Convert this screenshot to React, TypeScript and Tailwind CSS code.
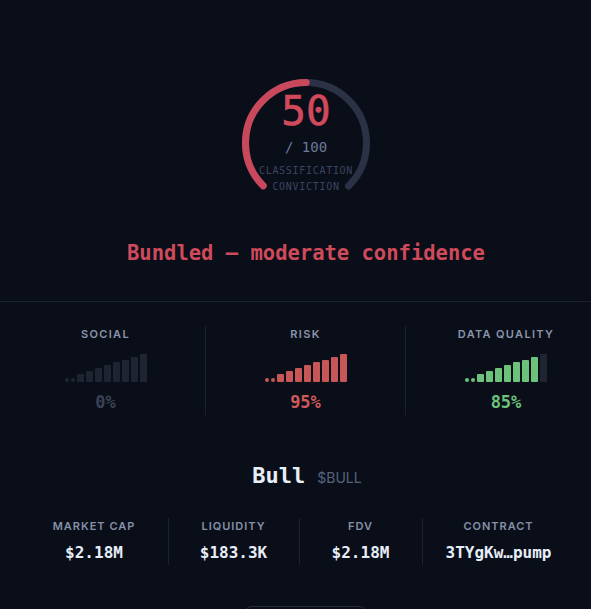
import React from "react";

const mono = { fontFamily: '"DejaVu Sans Mono", "Liberation Mono", monospace' };
const sans = { fontFamily: 'Inter, "Noto Sans", sans-serif' };

type Tone = "red" | "green" | "muted";

const toneFill: Record<Tone, string> = {
  red: "bg-[#c75656]",
  green: "bg-[#6cc27b]",
  muted: "bg-[#1f2432]",
};

const toneText: Record<Tone, string> = {
  red: "text-[#cf5a5a]",
  green: "text-[#6cc27b]",
  muted: "text-[#3a4254]",
};

const barHeights = [4, 4, 8, 11, 14, 17, 20, 22, 25, 28];

function SignalBars({ value, tone }: { value: number; tone: Tone }) {
  const filled = Math.round(value / 10);
  return (
    <div className="flex h-[28px] items-end gap-[2px]">
      {barHeights.map((h, i) => (
        <span
          key={i}
          className={`${i < 2 ? "w-[4px] rounded-full" : "w-[7px] rounded-[1px]"} ${
            i < filled ? toneFill[tone] : toneFill.muted
          }`}
          style={{ height: h }}
        />
      ))}
    </div>
  );
}

function StatColumn({
  label,
  value,
  tone,
  last,
}: {
  label: string;
  value: number;
  tone: Tone;
  last?: boolean;
}) {
  return (
    <div
      className={`flex h-[89px] flex-col items-center ${
        last ? "" : "border-r border-[#1c2130]"
      }`}
    >
      <p
        className="text-[11px] font-semibold uppercase leading-4 tracking-[0.12em] text-[#8994aa]"
        style={sans}
      >
        {label}
      </p>
      <div className="mt-[12px]">
        <SignalBars value={value} tone={value === 0 ? "muted" : tone} />
      </div>
      <p
        className={`mt-[10px] text-[17px] font-bold leading-5 ${
          value === 0 ? toneText.muted : toneText[tone]
        }`}
        style={mono}
      >
        {value}%
      </p>
    </div>
  );
}

function Metric({
  label,
  value,
  width,
  last,
}: {
  label: string;
  value: string;
  width: string;
  last?: boolean;
}) {
  return (
    <div
      className={`flex h-[47px] flex-col items-center ${width} ${
        last ? "" : "border-r border-[#1c2130]"
      }`}
    >
      <p
        className="text-[11px] font-semibold uppercase leading-4 tracking-[0.09em] text-[#8591a8]"
        style={sans}
      >
        {label}
      </p>
      <p
        className="mt-[8px] text-[16px] font-bold leading-[22px] text-[#e6edf8]"
        style={mono}
      >
        {value}
      </p>
    </div>
  );
}

function Gauge({ score }: { score: number }) {
  const r = 60.5;
  const circ = 2 * Math.PI * r;
  const arc = circ * 0.75;
  const filled = arc * (score / 100);
  return (
    <div className="relative h-[136px] w-[136px]">
      <svg width="136" height="136" viewBox="0 0 136 136">
        <circle
          cx="68"
          cy="68"
          r={r}
          fill="none"
          stroke="#2b3246"
          strokeWidth="7"
          strokeLinecap="round"
          strokeDasharray={`${arc} ${circ}`}
          transform="rotate(135 68 68)"
        />
        <circle
          cx="68"
          cy="68"
          r={r}
          fill="none"
          stroke="#c9485b"
          strokeWidth="7"
          strokeLinecap="round"
          strokeDasharray={`${filled} ${circ}`}
          transform="rotate(135 68 68)"
        />
      </svg>
      <div className="absolute inset-x-[-20px] top-[14px] flex flex-col items-center" style={mono}>
        <span className="text-[41px] leading-[44px] text-[#d04a5c] [-webkit-text-stroke:0.6px_#d04a5c]">
          {score}
        </span>
        <span className="mt-[4px] text-[14px] leading-5 text-[#6b7a99]">/ 100</span>
        <span className="mt-[6px] text-[10px] uppercase leading-4 tracking-[0.07em] text-[#3b4560]">
          Classification
        </span>
        <span className="text-[10px] uppercase leading-4 tracking-[0.07em] text-[#3b4560]">
          Conviction
        </span>
      </div>
    </div>
  );
}

export default function App() {
  return (
    <div className="min-h-screen w-full overflow-hidden bg-[#0a0e19]">
      <div className="w-[612px]">
        <section className="flex flex-col items-center pt-[75px]">
          <Gauge score={50} />
          <h1
            className="mt-[28px] text-[20.5px] font-bold leading-7 text-[#cf4a5b]"
            style={mono}
          >
            Bundled — moderate confidence
          </h1>
        </section>
      </div>
      <div className="mt-[34px] h-px w-full bg-[#1c2130]" />
      <div className="w-[612px]">
        <section className="mt-[24px] grid grid-cols-3 px-[6px]">
          <StatColumn label="Social" value={0} tone="muted" />
          <StatColumn label="Risk" value={95} tone="red" />
          <StatColumn label="Data Quality" value={85} tone="green" last />
        </section>
        <div className="mt-[46px] flex items-baseline justify-center gap-[12px] pl-[2px]">
          <h2 className="text-[22px] font-bold leading-[30px] text-[#e8eef8]" style={mono}>
            Bull
          </h2>
          <span className="text-[14px] text-[#56637d]" style={sans}>
            $BULL
          </span>
        </div>
      </div>
      <section className="mt-[27px] flex justify-center pl-[4px]">
        <Metric label="Market Cap" value="$2.18M" width="w-[148px]" />
        <Metric label="Liquidity" value="$183.3K" width="w-[131px]" />
        <Metric label="FDV" value="$2.18M" width="w-[123px]" />
        <Metric label="Contract" value="3TYgKw…pump" width="w-[152px]" last />
      </section>
      <div className="mt-[41px] flex justify-center pl-[20px] pb-10">
        <button
          aria-label="View on chain"
          className="h-[40px] w-[123px] rounded-lg border border-[#262c3c]"
        />
      </div>
    </div>
  );
}
